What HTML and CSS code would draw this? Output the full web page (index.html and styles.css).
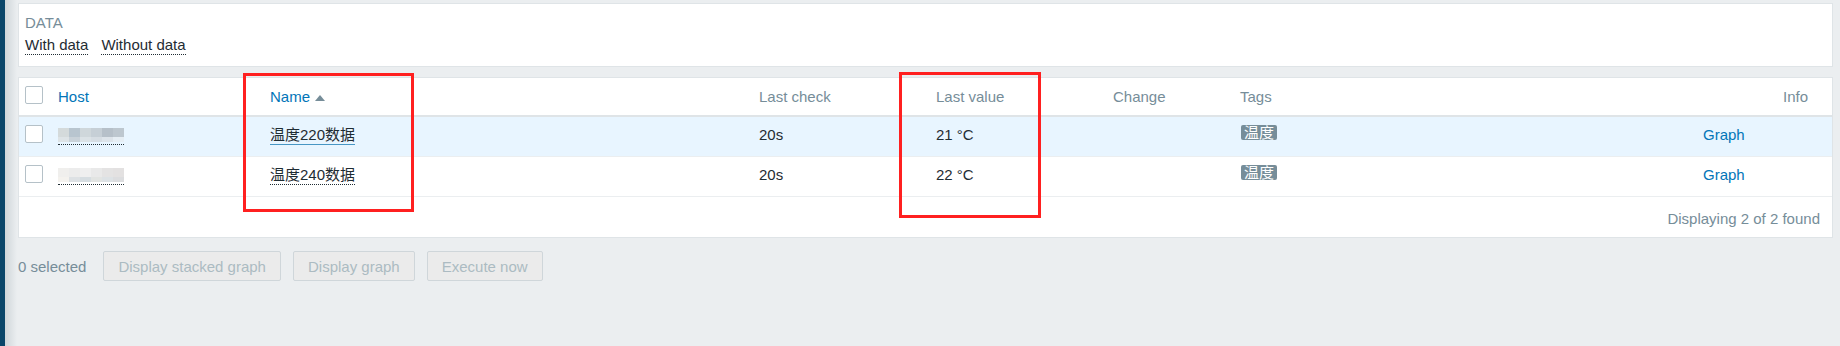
FILE: index.html
```html
<!DOCTYPE html>
<html lang="en">
<head>
  <meta charset="UTF-8" />
  <title>Latest data</title>
  <link rel="stylesheet" href="styles.css">
</head>
<body>
  <div class="layout">
    <aside class="sidebar"></aside>
    <main class="content">

      <!-- Filter -->
      <div class="filter">
        <div class="filter-label">DATA</div>
        <div class="filter-links">
          <a class="link-alt">With data</a>
          <a class="link-alt">Without data</a>
        </div>
      </div>

      <!-- Items list -->
      <div class="list">
        <table class="items">
          <colgroup>
            <col class="c-check"><col class="c-host"><col class="c-name"><col class="c-check-time">
            <col class="c-value"><col class="c-change"><col class="c-tags"><col class="c-graph"><col class="c-info">
          </colgroup>
          <thead>
            <tr>
              <th class="cell-check"><span class="checkbox"></span></th>
              <th><a class="sort">Host</a></th>
              <th><a class="sort">Name</a><span class="arrow-up"></span></th>
              <th>Last check</th>
              <th>Last value</th>
              <th>Change</th>
              <th>Tags</th>
              <th></th>
              <th>Info</th>
            </tr>
          </thead>
          <tbody>
            <tr class="hover">
              <td class="cell-check"><span class="checkbox"></span></td>
              <td><a class="host-blur">
                <span class="mosaic">
                  <i style="background:#d4dadb"></i><i style="background:#b8c5cf"></i><i style="background:#cfd7db"></i><i style="background:#c6cfd6"></i><i style="background:#b6c0c9"></i><i style="background:#bdc7cf"></i>
                  <i style="background:#dde3e6"></i><i style="background:#c9d2d9"></i><i style="background:#dbe2e6"></i><i style="background:#d6dde3"></i><i style="background:#dde4ea"></i><i style="background:#e6eef4"></i>
                </span>
              </a></td>
              <td><a class="link-alt">温度220数据</a></td>
              <td>20s</td>
              <td>21 °C</td>
              <td></td>
              <td><span class="tag">温度</span></td>
              <td><a class="link">Graph</a></td>
              <td></td>
            </tr>
            <tr>
              <td class="cell-check"><span class="checkbox"></span></td>
              <td><a class="host-blur">
                <span class="mosaic">
                  <i style="background:#f0efed"></i><i style="background:#ececec"></i><i style="background:#efefef"></i><i style="background:#e9e9e9"></i><i style="background:#e4e3e3"></i><i style="background:#e3e1e1"></i>
                  <i style="background:#f4f2ee"></i><i style="background:#dde1e4"></i><i style="background:#d6dde1"></i><i style="background:#e2e4e2"></i><i style="background:#dde2e5"></i><i style="background:#dcdddf"></i>
                </span>
              </a></td>
              <td><a class="link-alt">温度240数据</a></td>
              <td>20s</td>
              <td>22 °C</td>
              <td></td>
              <td><span class="tag">温度</span></td>
              <td><a class="link">Graph</a></td>
              <td></td>
            </tr>
          </tbody>
        </table>
        <div class="paging">Displaying 2 of 2 found</div>
      </div>

      <!-- Mass actions -->
      <div class="actions">
        <span class="selected">0 selected</span>
        <button class="btn" disabled>Display stacked graph</button>
        <button class="btn" disabled>Display graph</button>
        <button class="btn" disabled>Execute now</button>
      </div>
    </main>
  </div>

  <!-- annotation marks drawn over the screenshot -->
  <div class="mark mark-name"></div>
  <div class="mark mark-value"></div>
</body>
</html>
```

FILE: styles.css
```css
:root {
  --bg:#ebeef0;
  --border:#dfe4e7;
  --text:#1f2c33;
  --muted:#768d99;
  --link:#0275b8;
  --sidebar:#0a466a;
}
*{box-sizing:border-box;}
body {
  margin:0;
  background: var(--bg);
  color: var(--text);
  font-family: "Liberation Sans", Arial, "Noto Sans CJK SC", sans-serif;
  font-size:15px;
  position:relative;
}
.layout {display:flex; min-height:100vh;}
.sidebar {width:5px; flex:none; background: var(--sidebar);}
.content {
  flex:1;
  padding:3px 7px 0 13px;
  background: linear-gradient(to right,#cfd6da 0,#ebeef0 12px) no-repeat, var(--bg);
}

/* filter */
.filter {
  background:#fff;
  border:1px solid var(--border);
  padding:10px 6px 11px;
  line-height:18px;
}
.filter-label {color: var(--muted);}
.filter-links {margin-top:4px; display:flex; gap:13px;}
.link-alt {
  color: var(--text);
  border-bottom:1px dotted var(--text);
  cursor:pointer;
}

/* list */
.list {
  margin-top:10px;
  background:#fff;
  border:1px solid var(--border);
}
.items {width:100%; table-layout:fixed; border-collapse:separate; border-spacing:0;}
.c-check {width:39px;}
.c-host {width:212px;}
.c-name {width:489px;}
.c-check-time {width:177px;}
.c-value {width:177px;}
.c-change {width:127px;}
.c-tags {width:463px;}
.c-graph {width:80px;}
.c-info {width:49px;}
.items th {
  text-align:left;
  font-weight:normal;
  color: var(--muted);
  padding:10px 0;
  line-height:17px;
  border-bottom:2px solid var(--border);
  white-space:nowrap;
}
.items td {
  padding:8px 0 11px;
  line-height:19px;
  vertical-align:top;
  border-bottom:1px solid var(--bg);
  white-space:nowrap;
}
.items th.cell-check, .items td.cell-check {padding:8px 0 0 6px; vertical-align:top;}
.items tr.hover td {background:#e8f5ff;}
.items tr.hover .link-alt {border-bottom:1px solid #4796c4;}
.items .link-alt {padding-bottom:1px;}
.sort {color: var(--link); cursor:pointer;}
.arrow-up {
  display:inline-block;
  margin-left:5px;
  vertical-align:1px;
  border-left:5px solid transparent;
  border-right:5px solid transparent;
  border-bottom:6px solid var(--muted);
}
.checkbox {
  display:block;
  width:18px; height:18px;
  background:#fff;
  border:1px solid #b5c1c8;
  border-radius:2px;
}
.host-blur {
  display:inline-block;
  vertical-align:top;
  margin-top:3px;
  padding-bottom:2px;
  border-bottom:1px dotted var(--text);
}
.mosaic {
  display:grid;
  grid-template-columns:repeat(6,11px);
  grid-template-rows:9px 5px;
  width:66px;
}
.mosaic i {display:block;}
.tag {
  display:inline-block;
  vertical-align:top;
  height:15px;
  line-height:15px;
  padding:0 3px;
  margin-left:1px;
  overflow:hidden;
  background: var(--muted);
  color:#fff;
  border-radius:2px;
}
.link {color: var(--link); cursor:pointer;}
.paging {
  text-align:right;
  color: var(--muted);
  line-height:19px;
  padding:12px 12px 9px;
}

/* actions */
.actions {
  margin-top:13px;
  display:flex;
  align-items:center;
  gap:12px;
}
.selected {color: var(--muted); margin-right:5px;}
.btn {
  height:30px;
  padding:0 14px;
  font:inherit;
  background:#ebebeb;
  color:#acbbc2;
  border:1px solid #cfd6da;
  border-radius:2px;
}

/* red annotation boxes */
.mark {
  position:absolute;
  border:3px solid #ff2020;
}
.mark-name {left:243px; top:73px; width:171px; height:139px;}
.mark-value {left:899px; top:72px; width:142px; height:146px;}
```
